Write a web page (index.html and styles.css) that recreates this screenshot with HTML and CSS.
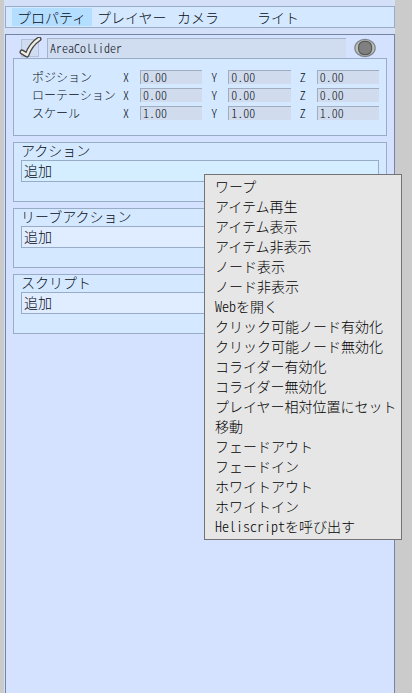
FILE: index.html
```html
<!DOCTYPE html>
<html lang="ja">
<head>
<meta charset="utf-8">
<meta name="viewport" content="width=device-width, initial-scale=1">
<title>プロパティ</title>
<link rel="stylesheet" href="styles.css">
</head>
<body>
<div class="window">
  <nav class="tabs">
    <button class="tab tab-active" type="button">プロパティ</button>
    <button class="tab" type="button">プレイヤー</button>
    <button class="tab" type="button">カメラ</button>
    <button class="tab" type="button">ライト</button>
  </nav>
  <main class="panel">
    <header class="object">
      <label class="enable">
        <input class="enable-box" type="checkbox" checked aria-label="有効">
        <svg class="check" viewBox="0 0 24 22" aria-hidden="true">
          <path d="M3 15 L8 18 C10 12 14 6 20 2" fill="none" stroke="#454545" stroke-width="5" stroke-linecap="round" stroke-linejoin="round"/>
          <path d="M3 15 L8 18 C10 12 14 6 20 2" fill="none" stroke="#f0eee6" stroke-width="2.4" stroke-linecap="round" stroke-linejoin="round"/>
        </svg>
      </label>
      <input class="name" type="text" value="AreaCollider" aria-label="名前">
      <button class="target" type="button" aria-label="選択">
        <svg class="target-icon" viewBox="0 0 22 20" aria-hidden="true">
          <ellipse cx="11" cy="10" rx="10.2" ry="8.6" fill="#b9bfb9" stroke="#7e8489" stroke-width="1.2"/>
          <rect x="4.6" y="3.4" width="13" height="13.2" rx="5.5" fill="#808080" stroke="#585858" stroke-width="1.2"/>
        </svg>
      </button>
    </header>
    <section class="group transform">
      <div class="vector">
        <span class="vector-name">ポジション</span>
        <label class="axis">X <input class="value" type="text" value="0.00"></label>
        <label class="axis">Y <input class="value" type="text" value="0.00"></label>
        <label class="axis">Z <input class="value" type="text" value="0.00"></label>
      </div>
      <div class="vector">
        <span class="vector-name">ローテーション</span>
        <label class="axis">X <input class="value" type="text" value="0.00"></label>
        <label class="axis">Y <input class="value" type="text" value="0.00"></label>
        <label class="axis">Z <input class="value" type="text" value="0.00"></label>
      </div>
      <div class="vector">
        <span class="vector-name">スケール</span>
        <label class="axis">X <input class="value" type="text" value="1.00"></label>
        <label class="axis">Y <input class="value" type="text" value="1.00"></label>
        <label class="axis">Z <input class="value" type="text" value="1.00"></label>
      </div>
    </section>
    <section class="group">
      <h2 class="title">アクション</h2>
      <div class="picker">
        <button class="add add-open" type="button" aria-haspopup="menu" aria-expanded="true">追加</button>
        <div class="menu" role="menu">
          <button class="item" type="button" role="menuitem">ワープ</button>
          <button class="item" type="button" role="menuitem">アイテム再生</button>
          <button class="item" type="button" role="menuitem">アイテム表示</button>
          <button class="item" type="button" role="menuitem">アイテム非表示</button>
          <button class="item" type="button" role="menuitem">ノード表示</button>
          <button class="item" type="button" role="menuitem">ノード非表示</button>
          <button class="item" type="button" role="menuitem">Webを開く</button>
          <button class="item" type="button" role="menuitem">クリック可能ノード有効化</button>
          <button class="item" type="button" role="menuitem">クリック可能ノード無効化</button>
          <button class="item" type="button" role="menuitem">コライダー有効化</button>
          <button class="item" type="button" role="menuitem">コライダー無効化</button>
          <button class="item" type="button" role="menuitem">プレイヤー相対位置にセット</button>
          <button class="item" type="button" role="menuitem">移動</button>
          <button class="item" type="button" role="menuitem">フェードアウト</button>
          <button class="item" type="button" role="menuitem">フェードイン</button>
          <button class="item" type="button" role="menuitem">ホワイトアウト</button>
          <button class="item" type="button" role="menuitem">ホワイトイン</button>
          <button class="item" type="button" role="menuitem">Heliscriptを呼び出す</button>
        </div>
      </div>
    </section>
    <section class="group">
      <h2 class="title">リーブアクション</h2>
      <button class="add" type="button" aria-haspopup="menu">追加</button>
    </section>
    <section class="group">
      <h2 class="title">スクリプト</h2>
      <button class="add" type="button" aria-haspopup="menu">追加</button>
    </section>
  </main>
</div>
</body>
</html>
```

FILE: styles.css
```css
* {
  box-sizing: border-box;
}

body {
  margin: 0;
  background: #cbcbcb;
  color: #080c14;
  font: 300 14px/20px "Noto Sans CJK JP", sans-serif;
}

button,
input {
  margin: 0;
  padding: 0;
  border: 0;
  border-radius: 0;
  background: none;
  color: inherit;
  font: inherit;
}

/* Half-width Latin letters and digits, on the same grid as the kana */
.name,
.axis,
.value,
.item {
  font-feature-settings: "hwid";
}

.window {
  display: flex;
  flex-direction: column;
  gap: 6px;
  min-height: 100vh;
  margin: 0 17px 0 4px;
  padding: 6px 0 0 1px;
  background: #d4e0f8;
}

.tabs {
  display: flex;
  padding: 1px 6px;
  border: 1px solid #98acc8;
  background: #d4e9ff;
}

.tab {
  width: 80px;
  height: 18px;
  padding-left: 5px;
  line-height: 18px;
  text-align: left;
  white-space: nowrap;
}

.tab-active {
  background: #b4deff;
}

.panel {
  display: flex;
  flex: 1;
  flex-direction: column;
  gap: 6px;
  padding: 3px 7px 0;
  border: 1px solid #7484a4;
  border-bottom: 0;
  background: #d4e2ff;
}

.object {
  display: flex;
  align-items: center;
  gap: 8px;
  padding: 0 11px 0 8px;
  margin-bottom: -6px;
}

.enable {
  position: relative;
  display: flex;
}

.enable-box {
  appearance: none;
  width: 18px;
  height: 18px;
  border: 1px solid #b4c2da;
  background: #d0dcf0;
}

.check {
  position: absolute;
  top: -2px;
  left: -2px;
  width: 24px;
  height: 22px;
}

.name {
  flex: 1;
  min-width: 0;
  height: 20px;
  padding: 0 0 2px 2px;
  border-top: 1px solid #a4b2ca;
  border-left: 1px solid #a4b2ca;
  background: #d0dcf0;
  font-size: 12px;
  line-height: 16px;
}

.target {
  display: flex;
}

.target-icon {
  width: 22px;
  height: 20px;
}

.group {
  min-height: 60px;
  padding: 0 7px;
  border: 1px solid #98acc8;
  background: #d4e9ff;
}

.transform {
  display: grid;
  align-content: start;
  gap: 4px;
  min-height: 78px;
  padding: 11px 7px 0 18px;
}

.vector {
  display: grid;
  grid-template-columns: 82px repeat(3, 1fr);
  gap: 9px;
  height: 14px;
  font-size: 12px;
  line-height: 14px;
}

.vector-name {
  white-space: nowrap;
}

.axis {
  display: grid;
  grid-template-columns: 17px 1fr;
}

.value {
  width: 100%;
  min-width: 0;
  height: 14px;
  padding: 0 0 2px 2px;
  border-top: 1px solid #a0acc0;
  border-left: 1px solid #a0acc0;
  background: #d0dcee;
  line-height: 11px;
}

.title {
  margin: 0;
  height: 17px;
  font-size: 14px;
  font-weight: 300;
  line-height: 15px;
}

.picker {
  position: relative;
}

.add {
  display: block;
  width: 100%;
  height: 22px;
  padding: 0 0 2px 2px;
  border: 1px solid #98acc8;
  background: #e0ecff;
  line-height: 18px;
  text-align: left;
}

.add-open {
  background: #d4eeff;
}

.menu {
  position: absolute;
  z-index: 1;
  top: 14px;
  left: 183px;
  display: flex;
  flex-direction: column;
  padding: 1px 0 3px;
  border: 1px solid #747474;
  background: #e6e6e6;
  color: #000;
}

.item {
  height: 20px;
  padding: 0 4px 0 10px;
  line-height: 20px;
  text-align: left;
  white-space: nowrap;
}
```
